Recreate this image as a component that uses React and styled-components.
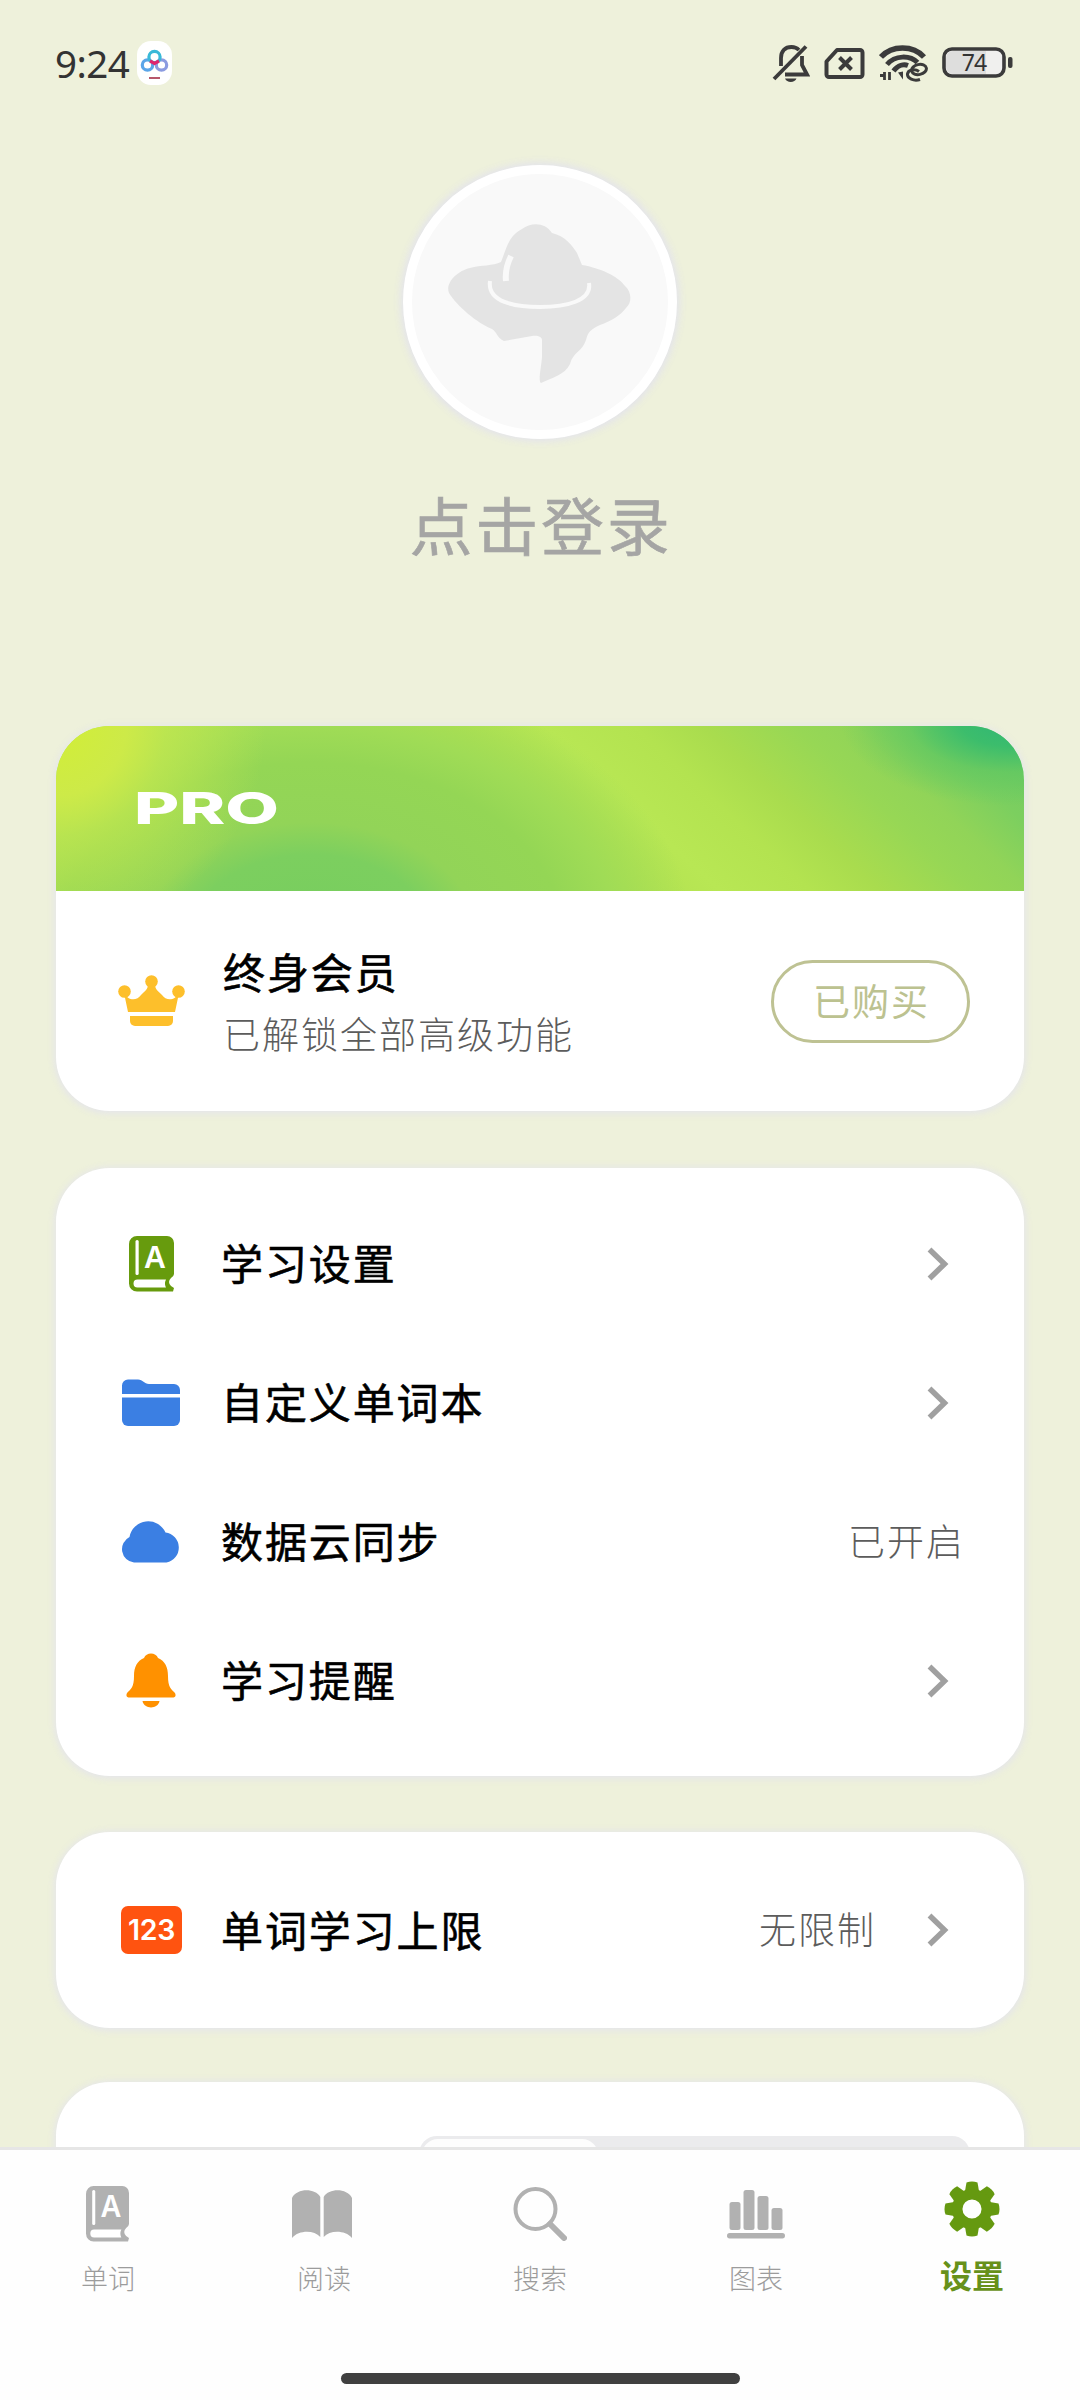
import React from "react";
import styled, { createGlobalStyle } from "styled-components";

const GlobalStyle = createGlobalStyle`
  * { box-sizing: border-box; }
  html, body { margin: 0; padding: 0; background: #eef1db; }
  body {
    font-family: "Noto Sans", "Noto Sans CJK SC", sans-serif;
    -webkit-font-smoothing: antialiased;
  }
`;

const Screen = styled.div`
  width: 1080px;
  height: 2400px;
  display: flex;
  flex-direction: column;
  overflow: hidden;
  background: #eef1db;
`;

const StatusBar = styled.header`
  flex: none;
  height: 126px;
  padding: 0 65px 0 55px;
  display: flex;
  align-items: center;
  justify-content: space-between;
`;

const StatusGroup = styled.div`
  display: flex;
  align-items: center;
  gap: ${(p) => p.$gap}px;
`;

const Clock = styled.span`
  font-size: 38.5px;
  line-height: 44px;
  letter-spacing: -0.5px;
  color: #333;
`;

const Content = styled.main`
  flex: none;
  height: 2021px;
  padding: 0 56px;
  display: flex;
  flex-direction: column;
  overflow: hidden;
`;

const Profile = styled.section`
  flex: none;
  height: 600px;
  padding-top: 39px;
  display: flex;
  flex-direction: column;
  align-items: center;
`;

const Avatar = styled.div`
  width: 274px;
  height: 274px;
  border-radius: 50%;
  border: 9px solid #fff;
  background: #f9f9f9;
  box-shadow: 0 0 7px 3px rgba(228, 228, 236, 0.95);
  display: flex;
  align-items: center;
  justify-content: center;
`;

const LoginText = styled.div`
  margin-top: 39px;
  padding-left: 2px;
  font-size: 63px;
  line-height: 96px;
  letter-spacing: 2.8px;
  color: #a5a5a4;
  -webkit-text-stroke: 0.6px #a5a5a4;
`;

const Card = styled.section`
  flex: none;
  border-radius: 54px;
  background: #fff;
  box-shadow: 0 1px 6px 2px rgba(228, 228, 236, 0.85);
  margin-bottom: ${(p) => p.$after || 0}px;
  padding: ${(p) => p.$pad || 0}px 0;
  overflow: hidden;
`;

const ProBanner = styled.div`
  height: 165px;
  padding: 66px 0 0 78px;
  background:
    radial-gradient(circle at 0 0, #d2ee36 0, #cdea48 70px, rgba(196, 232, 78, 0.7) 110px, rgba(184, 230, 82, 0) 210px),
    radial-gradient(ellipse 170px 85px at 955px -5px, #2fb676 0, #3cbd6c 30%, rgba(90, 198, 98, 0.6) 60%, rgba(110, 205, 94, 0) 100%),
    radial-gradient(ellipse 383px 270px at 255px 215px, #76cd5e 0, #7ccf5f 32%, #92d458 44%, #94d655 66%, #a0dc56 80%, rgba(176, 224, 78, 0) 100%),
    linear-gradient(43deg, #b6e653 0, #b2e150 50%, #b8e754 58%, #b3e350 66%, #a9dc4e 72%, #97d755 80%, #91d458 85%, #7ccf5f 91%, #70ca62 100%);
`;

const ProMark = styled.span`
  display: inline-block;
  font-family: Inter, "Liberation Sans", sans-serif;
  font-weight: 800;
  font-size: 44px;
  line-height: 33px;
  color: #fff;
  transform: scaleX(1.58);
  transform-origin: 0 50%;
`;

const Member = styled.div`
  height: 220px;
  padding: 0 54px 0 62px;
  display: flex;
  align-items: center;
`;

const MemberText = styled.div`
  flex: 1;
  padding: 4px 0 0 38px;
  display: flex;
  flex-direction: column;
`;

const Title = styled.span`
  font-size: 42px;
  line-height: 63px;
  font-weight: 400;
  letter-spacing: 1.9px;
  color: #000;
  -webkit-text-stroke: 0.6px #000;
`;

const Note = styled.span`
  font-size: 37px;
  line-height: 62px;
  font-weight: 300;
  letter-spacing: 2px;
  color: #5c5c5c;
`;

const PurchasedButton = styled.button`
  width: 199px;
  height: 83px;
  padding: 0 0 2px 2px;
  border: 3px solid #bec293;
  border-radius: 42px;
  background: #fff;
  font-family: inherit;
  font-size: 37px;
  letter-spacing: 2px;
  color: #bcc290;
`;

const Row = styled.div`
  height: 139px;
  padding: 0 62px 0 59px;
  display: flex;
  align-items: center;
`;

const RowIcon = styled.span`
  width: 72px;
  height: 72px;
  display: flex;
  align-items: center;
  justify-content: center;
`;

const RowTitle = styled(Title)`
  flex: 1;
  padding-left: 34px;
`;

const RowNote = styled(Note)`
  margin-right: ${(p) => p.$right}px;
`;

const ChevronBox = styled.span`
  display: flex;
  margin-right: 12px;
`;

const SegmentRow = styled.div`
  padding: 54px 54px 0 0;
  display: flex;
  justify-content: flex-end;
`;

const Segments = styled.div`
  width: 551px;
  height: 72px;
  border-radius: 18px;
  background: #ebebed;
  padding: 3px;
`;

const SelectedSegment = styled.div`
  width: 176px;
  height: 66px;
  border-radius: 16px;
  background: #fdfdfd;
`;

const TabBar = styled.nav`
  flex: none;
  height: 253px;
  background: #fefefe;
  border-top: 3px solid #e6e6e6;
  display: flex;
  flex-direction: column;
  align-items: center;
`;

const Tabs = styled.div`
  width: 100%;
  height: 223px;
  display: grid;
  grid-template-columns: repeat(5, 1fr);
`;

const Tab = styled.div`
  display: flex;
  flex-direction: column;
  align-items: center;
  padding-top: ${(p) => (p.$active ? 28 : 33)}px;
`;

const TabIcon = styled.span`
  height: 62px;
  padding-right: ${(p) => p.$shift || 0}px;
  display: flex;
  align-items: center;
`;

const TabLabel = styled.span`
  margin-top: ${(p) => (p.$active ? 16 : 14)}px;
  font-size: ${(p) => (p.$active ? 32 : 27)}px;
  line-height: 40px;
  font-weight: ${(p) => (p.$active ? 600 : 300)};
  color: ${(p) => (p.$active ? "#67911a" : "#9c9c9c")};
`;

const HomeIndicator = styled.div`
  width: 399px;
  height: 11px;
  border-radius: 6px;
  background: #404040;
`;

const CloudAppIcon = () => (
  <svg width="36" height="44" viewBox="0 0 36 44">
    <rect x="0" y="0" width="35" height="44" rx="14" fill="#fff" />
    <g fill="none" strokeWidth="3.2">
      <circle cx="10.500" cy="24" r="5.2" stroke="#5aa5e8" />
      <circle cx="24.500" cy="24" r="5.2" stroke="#8b9be0" />
      <circle cx="17.500" cy="16" r="5.600" stroke="#39b9d8" />
      <path d="M13 20l4.500 2.500 4.500-2.500" stroke="#e0246e" />
    </g>
    <rect x="12" y="36" width="11" height="2" fill="#b7576b" />
  </svg>
);

const MutedIcon = () => (
  <svg width="38" height="40" viewBox="0 0 38 40" fill="none" stroke="#3b3b3b" strokeWidth="3.8">
    <path d="M9 23V15C9 8 13 4 19.500 4c3 0 5.500 1 7.500 3" />
    <path d="M30 13v9l5 9.500H13" />
    <path d="M2 36L34 3.500" />
    <path d="M13 35.500c1.500 4.500 10 4.500 11.500 0z" fill="#3b3b3b" stroke="none" />
  </svg>
);

const SimIcon = () => (
  <svg width="41" height="33" viewBox="0 0 41 33" fill="none" stroke="#3b3b3b" strokeWidth="4">
    <path d="M13 3H36a2.500 2.500 0 0 1 2.500 2.500V27.500A2.500 2.500 0 0 1 36 30H5A2.500 2.500 0 0 1 2.500 27.500V14.500z" strokeLinejoin="round" />
    <path d="M15.500 10.500l12 12M27.500 10.500l-12 12" />
  </svg>
);

const WifiIcon = () => (
  <svg width="49" height="38" viewBox="0 0 49 38" fill="none" stroke="#3b3b3b">
    <path d="M2 13C13 1 34 1 45 13" strokeWidth="5.500" />
    <path d="M8 20.500C16 11 31 11 38.500 18.500" strokeWidth="5" />
    <path d="M14.500 27C19 21 25 20 29 21.500" strokeWidth="5" />
    <path d="M5.500 28v8M1 31.500l4.500 0M10.500 36v-8" strokeWidth="2.800" />
    <path d="M19 28.500l5-1v8z" fill="#3b3b3b" stroke="none" />
    <ellipse cx="40" cy="25.500" rx="7.500" ry="5" strokeWidth="3" transform="rotate(-12 40 25.500)" />
    <path d="M41 35.500C35 37.500 28 34.500 28.500 30 29 25.500 36 24.500 40 27.500" strokeWidth="3" />
  </svg>
);

const BatteryIcon = () => (
  <svg width="73" height="32" viewBox="0 0 73 32">
    <rect x="2" y="2" width="60" height="27" rx="8" fill="#f0f0ee" stroke="#3b3b3b" strokeWidth="3.600" />
    <path d="M11 4H44V27H11A7 7 0 0 1 4 20V11A7 7 0 0 1 11 4z" fill="#dededd" />
    <rect x="66" y="10" width="4.500" height="11" rx="2" fill="#3b3b3b" />
    <text x="32" y="23.500" textAnchor="middle" fontFamily="Noto Sans, sans-serif" fontSize="23" letterSpacing="-0.8" fill="#333">74</text>
  </svg>
);

const SaucerIcon = () => (
  <svg width="256" height="256" viewBox="412 174 256 256">
    <path
      fill="#e4e4e4"
      d="M501 262 C506 250 508 236 522 229 C531 222 545 222 552 233 C565 236 572 245 577 253 L582 265
         C600 268 618 276 625 286 C632 292 632 303 626 308 C620 316 611 321 600 325
         C591 329 588 332 586 340 C582 352 573 352 570 364 C565 375 551 378 541 383
         C538 381 541 369 542 357 V340 C542 337 538 335 532 336 L504 341
         C497 338 497 332 492 329 C477 323 457 306 449 293 C445 283 457 271 470 268 C481 265 493 266 501 262z"
    />
    <path d="M490 281C487 302 515 307 540 307C566 307 592 301 589 283" fill="none" stroke="#f9f9f9" strokeWidth="4" />
    <path d="M511 256C507 264 505 272 506 281" fill="none" stroke="#f9f9f9" strokeWidth="6" />
  </svg>
);

const CrownIcon = () => (
  <svg width="67" height="52" viewBox="0 0 67 52" fill="#fdbf2b">
    <circle cx="33.500" cy="6.500" r="6.300" />
    <circle cx="6.500" cy="16.500" r="6.300" />
    <circle cx="60.500" cy="16.500" r="6.300" />
    <path d="M6 18C10 26 19 26 23 20 29 14 30 14 30 8h7c0 6 1 6 7 12 4 6 13 6 17-2L57 37H10z" />
    <path d="M12 41H55V46a5 5 0 0 1-5 5H17a5 5 0 0 1-5-5z" />
  </svg>
);

const BookIcon = ({ color, width = 45, bg = "#fff" }) => (
  <svg width={width} height="56" viewBox="0 0 45 56" preserveAspectRatio="none">
    <path d="M8 0H38a7 7 0 0 1 7 7V37a5 5 0 0 1-3 5q-4 4 0 8l3 2-1 3.500H8a8 8 0 0 1-8-8V8A8 8 0 0 1 8 0z" fill={color} />
    <path d="M9 43.500H37q-2 4 0 8H8.500a4 4 0 0 1 0-8z" fill={bg} />
    <rect x="6.500" y="4" width="3.200" height="35" rx="1.500" fill={bg} />
    <text x="26" y="31.500" textAnchor="middle" fontFamily="Inter, sans-serif" fontWeight="600" fontSize="30" fill={bg}>A</text>
  </svg>
);

const FolderIcon = () => (
  <svg width="60" height="48" viewBox="0 0 60 48" fill="#3b7fe3">
    <path d="M1 15V6.500A6 6 0 0 1 7 .5H17C22 .5 23 5 28 5H53a6 6 0 0 1 6 6V15z" />
    <path d="M1 18.500H59V41a6 6 0 0 1-6 6H7a6 6 0 0 1-6-6z" />
  </svg>
);

const CloudIcon = () => (
  <svg width="62" height="43" viewBox="0 0 62 43">
    <path fill="#3b7fe3" d="M14 42.500A13.500 13.500 0 0 1 9.500 17 A19 19 0 0 1 45.500 12.500 A15.200 15.200 0 0 1 46.500 42.500z" />
  </svg>
);

const BellIcon = () => (
  <svg width="50" height="55" viewBox="0 0 50 55" fill="#ff9100">
    <path d="M18 5C20-1 30-1 32 5C39 8 42 14 42 23C42 34 45 36 49 40Q51 44.500 46 44.500H4Q-1 44.500 1 40C5 36 8 34 8 23C8 14 11 8 18 5z" />
    <path d="M16.500 48H33.500C32 56.500 18 56.500 16.500 48z" />
  </svg>
);

const NumbersIcon = () => (
  <svg width="61" height="48" viewBox="0 0 61 48">
    <rect width="61" height="48" rx="7" fill="#ff5310" />
    <text x="30.500" y="34" textAnchor="middle" fontFamily="Inter, sans-serif" fontWeight="600" fontSize="28.500" letterSpacing="-0.3" fill="#fff">123</text>
  </svg>
);

const Chevron = () => (
  <svg width="24" height="34" viewBox="0 0 24 34" fill="none" stroke="#a0a0a0" strokeWidth="5.500">
    <path d="M3.500 2.500L18.500 17L3.500 31.500" />
  </svg>
);

const OpenBookIcon = () => (
  <svg width="60" height="50" viewBox="0 0 60 50" fill="#b1b1b1">
    <path d="M0 9C5-1 23-1 28.300 8V48C22 41 7 41 0 49z" />
    <path d="M31.700 8C37-1 55-1 60 9V49C53 41 38 41 31.700 48z" />
  </svg>
);

const SearchIcon = () => (
  <svg width="54" height="54" viewBox="0 0 54 54" fill="none" stroke="#b1b1b1">
    <circle cx="22.500" cy="22" r="20" strokeWidth="4" />
    <path d="M37 37L51 51" strokeWidth="6" strokeLinecap="round" />
  </svg>
);

const ChartIcon = () => (
  <svg width="58" height="50" viewBox="0 0 58 50" fill="#b1b1b1">
    <rect x="2.500" y="13" width="11" height="28" rx="2.500" />
    <rect x="16.500" y="1" width="11" height="40" rx="2.500" />
    <rect x="30.500" y="7" width="11" height="34" rx="2.500" />
    <rect x="44.500" y="19" width="11" height="22" rx="2.500" />
    <rect x="0" y="44" width="58" height="5.500" rx="2.700" />
  </svg>
);

const GearIcon = () => (
  <svg width="56" height="56" viewBox="-28 -28 56 56">
    <g fill="#659910">
      {[0, 45, 90, 135, 180, 225, 270, 315].map((a) => (
        <path key={a} transform={`rotate(${a})`} d="M-7.500 -15L-5.500 -26.500Q0 -28.500 5.500 -26.500L7.500 -15z" />
      ))}
    </g>
    <circle r="14.800" fill="none" stroke="#659910" strokeWidth="10.500" />
  </svg>
);

const settings = [
  { icon: <BookIcon color="#679b0d" />, title: "学习设置", chevron: true },
  { icon: <FolderIcon />, title: "自定义单词本", chevron: true },
  { icon: <CloudIcon />, title: "数据云同步", note: "已开启" },
  { icon: <BellIcon />, title: "学习提醒", chevron: true },
];

const tabs = [
  { icon: <BookIcon color="#b1b1b1" width={43} />, label: "单词", shift: 2 },
  { icon: <OpenBookIcon />, label: "阅读", shift: 4 },
  { icon: <SearchIcon />, label: "搜索" },
  { icon: <ChartIcon />, label: "图表" },
  { icon: <GearIcon />, label: "设置", active: true, shift: 1 },
];

const SettingRow = ({ icon, title, note, chevron }) => (
  <Row>
    <RowIcon>{icon}</RowIcon>
    <RowTitle>{title}</RowTitle>
    {note && <RowNote $right={chevron ? 50 : -3}>{note}</RowNote>}
    {chevron && (
      <ChevronBox>
        <Chevron />
      </ChevronBox>
    )}
  </Row>
);

export default function App() {
  return (
    <Screen>
      <GlobalStyle />
      <StatusBar>
        <StatusGroup $gap={8}>
          <Clock>9:24</Clock>
          <CloudAppIcon />
        </StatusGroup>
        <StatusGroup $gap={14}>
          <MutedIcon />
          <SimIcon />
          <WifiIcon />
          <BatteryIcon />
        </StatusGroup>
      </StatusBar>
      <Content>
        <Profile>
          <Avatar>
            <SaucerIcon />
          </Avatar>
          <LoginText>点击登录</LoginText>
        </Profile>
        <Card $after={57}>
          <ProBanner>
            <ProMark>PRO</ProMark>
          </ProBanner>
          <Member>
            <CrownIcon />
            <MemberText>
              <Title>终身会员</Title>
              <Note>已解锁全部高级功能</Note>
            </MemberText>
            <PurchasedButton>已购买</PurchasedButton>
          </Member>
        </Card>
        <Card $after={56} $pad={26}>
          {settings.map((s) => (
            <SettingRow key={s.title} {...s} />
          ))}
        </Card>
        <Card $after={54} $pad={28.5}>
          <SettingRow icon={<NumbersIcon />} title="单词学习上限" note="无限制" chevron />
        </Card>
        <Card>
          <SegmentRow>
            <Segments>
              <SelectedSegment />
            </Segments>
          </SegmentRow>
        </Card>
      </Content>
      <TabBar>
        <Tabs>
          {tabs.map((t) => (
            <Tab key={t.label} $active={t.active}>
              <TabIcon $shift={t.shift}>{t.icon}</TabIcon>
              <TabLabel $active={t.active}>{t.label}</TabLabel>
            </Tab>
          ))}
        </Tabs>
        <HomeIndicator />
      </TabBar>
    </Screen>
  );
}
